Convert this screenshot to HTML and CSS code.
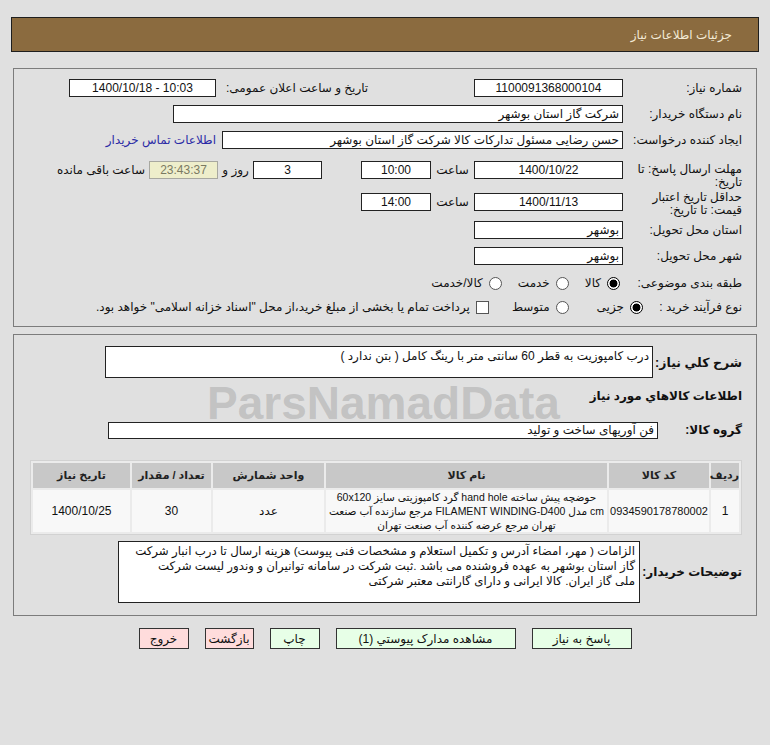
FILE: index.html
```html
<!DOCTYPE html>
<html lang="fa" dir="rtl">
<head>
<meta charset="utf-8">
<title>جزئیات اطلاعات نیاز</title>
<link rel="stylesheet" href="styles.css">
</head>
<body>
<div class="page">
  <div class="titlebar">جزئیات اطلاعات نیاز</div>

  <div class="panel p1">
    <div class="row">
      <div class="lbl">شماره نیاز:</div>
      <div class="box w149">1100091368000104</div>
      <div class="pushleft">
        <div class="lbl2">تاریخ و ساعت اعلان عمومی:</div>
        <div class="box w147" dir="ltr">1400/10/18 - 10:03</div>
      </div>
    </div>
    <div class="row">
      <div class="lbl">نام دستگاه خریدار:</div>
      <div class="box start w450">شرکت گاز استان بوشهر</div>
    </div>
    <div class="row">
      <div class="lbl">ایجاد کننده درخواست:</div>
      <div class="box start w401">حسن رضایی مسئول تدارکات کالا شرکت گاز استان بوشهر</div>
      <a class="link" href="#">اطلاعات تماس خریدار</a>
    </div>
    <div class="row tall r4">
      <div class="lbl two">مهلت ارسال پاسخ: تا<br>تاریخ:</div>
      <div class="box w149">1400/10/22</div>
      <div class="mid">ساعت</div>
      <div class="box w70">10:00</div>
      <div class="box w69 gap39">3</div>
      <div class="mid2">روز و</div>
      <div class="box remain w69">23:43:37</div>
      <div class="after">ساعت باقی مانده</div>
    </div>
    <div class="row tall r5">
      <div class="lbl two">حداقل تاریخ اعتبار<br>قیمت: تا تاریخ:</div>
      <div class="box w149">1400/11/13</div>
      <div class="mid">ساعت</div>
      <div class="box w70">14:00</div>
    </div>
    <div class="row">
      <div class="lbl">استان محل تحویل:</div>
      <div class="box start w149">بوشهر</div>
    </div>
    <div class="row">
      <div class="lbl">شهر محل تحویل:</div>
      <div class="box start w149">بوشهر</div>
    </div>
    <div class="row r8">
      <div class="lbl">طبقه بندی موضوعی:</div>
      <div class="opt first"><span class="radio on"></span>کالا</div>
      <div class="opt"><span class="radio"></span>خدمت</div>
      <div class="opt"><span class="radio"></span>کالا/خدمت</div>
    </div>
    <div class="row r9">
      <div class="lbl9">نوع فرآیند خرید :</div>
      <div class="opt"><span class="radio on"></span>جزیی</div>
      <div class="opt o9b"><span class="radio"></span>متوسط</div>
      <div class="opt o9c"><span class="chk"></span>پرداخت تمام یا بخشی از مبلغ خرید،از محل "اسناد خزانه اسلامی" خواهد بود.</div>
    </div>
  </div>

  <div class="panel p2">
    <div class="row desc">
      <div class="blbl l89">شرح کلي نياز:</div>
      <div class="box tl w548 h32">درب کامپوزیت به قطر 60 سانتی متر با رینگ کامل ( بتن ندارد )</div>
    </div>
    <div class="row info">
      <div class="blbl">اطلاعات کالاهاي مورد نياز</div>
    </div>
    <div class="row group">
      <div class="blbl l84">گروه کالا:</div>
      <div class="box start w550">فن آوریهای ساخت و تولید</div>
    </div>
    <table class="items">
      <colgroup>
        <col class="c1"><col class="c2"><col class="c3"><col class="c4"><col class="c5"><col class="c6">
      </colgroup>
      <thead>
        <tr><th>ردیف</th><th>کد کالا</th><th>نام کالا</th><th>واحد شمارش</th><th>تعداد / مقدار</th><th>تاریخ نیاز</th></tr>
      </thead>
      <tbody>
        <tr>
          <td>1</td>
          <td class="code">0934590178780002</td>
          <td class="name">حوضچه پیش ساخته hand hole گرد کامپوزیتی سایز 60x120<br>cm مدل FILAMENT WINDING-D400 مرجع سازنده آب صنعت<br>تهران مرجع عرضه کننده آب صنعت تهران</td>
          <td>عدد</td>
          <td>30</td>
          <td>1400/10/25</td>
        </tr>
      </tbody>
    </table>
    <div class="row notesrow">
      <div class="blbl l102">توضیحات خریدار:</div>
      <div class="notes">الزامات ( مهر، امضاء آدرس و تکمیل استعلام و مشخصات فنی پیوست) هزینه ارسال تا درب انبار شرکت<br>گاز استان بوشهر به عهده فروشنده می باشد .ثبت شرکت در سامانه توانیران و وندور لیست شرکت<br>ملی گاز ایران. کالا ایرانی و دارای گارانتی معتبر شرکتی</div>
    </div>
  </div>

  <div class="buttons">
    <div class="btn green b100">پاسخ به نیاز</div>
    <div class="btn green b180">مشاهده مدارک پیوستي (1)</div>
    <div class="btn green b50">چاپ</div>
    <div class="btn red b49">بازگشت</div>
    <div class="btn red b50">خروج</div>
  </div>

  <div class="watermark" aria-hidden="true"></div>
</div>
</body>
</html>
```

FILE: styles.css
```css
* { box-sizing: border-box; }

body {
  margin: 0;
  background: #e0e0e0;
  direction: rtl;
  font-family: "Liberation Sans", "DejaVu Sans", sans-serif;
  font-size: 12px;
  color: #111;
}

.page {
  position: relative;
  padding: 17px 11px 0;
}

.titlebar {
  height: 35px;
  background: #8b6b3f;
  border: 1px solid #1e1e1e;
  color: #f3ead6;
  padding-right: 26px;
  display: flex;
  align-items: center;
  font-size: 12px;
}

.panel {
  margin: 16px 2px 0;
  border: 1px solid #7c7c7c;
  padding: 6px 14px 9px 14px;
}

.row {
  display: flex;
  align-items: center;
  height: 26px;
}

.lbl {
  width: 119px;
  flex-shrink: 0;
  white-space: nowrap;
}

.lbl.two { line-height: 13px; }

.box {
  height: 18px;
  border: 1px solid #222;
  background: #fff;
  display: flex;
  align-items: center;
  justify-content: center;
  padding: 0 3px;
  white-space: nowrap;
  overflow: hidden;
  flex-shrink: 0;
}

.box.start { justify-content: flex-start; }

.w149 { width: 149px; }
.w147 { width: 147px; }
.w450 { width: 450px; }
.w401 { width: 401px; }
.w70 { width: 70px; }
.w69 { width: 69px; }
.w548 { width: 548px; }
.w550 { width: 550px; }
.h32 { height: 32px; }

.pushleft {
  margin-right: auto;
  margin-left: 41px;
  display: flex;
  align-items: center;
}

.lbl2 { margin-left: 10px; white-space: nowrap; }

.link {
  margin-right: 6px;
  color: #2b2ba6;
  text-decoration: none;
  white-space: nowrap;
}

.row.tall { align-items: flex-start; }
.r4 { height: 34px; }
.r4 .lbl { padding-top: 10px; }
.r4 .box, .r4 .mid, .r4 .mid2, .r4 .after { margin-top: 8px; }
.r5 { height: 30px; }
.r5 .lbl { padding-top: 4px; }
.r5 .box, .r5 .mid { margin-top: 6px; }

.mid {
  width: 43px;
  height: 18px;
  display: flex;
  align-items: center;
  justify-content: center;
  flex-shrink: 0;
}

.mid2 {
  width: 35px;
  height: 18px;
  display: flex;
  align-items: center;
  justify-content: center;
  flex-shrink: 0;
  white-space: nowrap;
}

.gap39 { margin-right: 39px; }

.box.remain {
  background: #eeeecb;
  border-color: #a8a8a0;
  color: #7a7a62;
}

.after {
  margin-right: 4px;
  height: 18px;
  display: flex;
  align-items: center;
  white-space: nowrap;
}

.r8 { height: 28px; }
.r9 { height: 20px; }

.lbl9 {
  width: 99px;
  flex-shrink: 0;
  white-space: nowrap;
}

.opt {
  display: flex;
  align-items: center;
  gap: 6px;
  margin-left: 16px;
  white-space: nowrap;
}

.opt.first { margin-right: 3px; }
.opt.o9b { margin-right: 12px; }
.opt.o9c { margin-right: 7px; }

.radio {
  width: 13px;
  height: 13px;
  border-radius: 50%;
  border: 1px solid #555;
  background: #fff;
  display: inline-block;
  flex-shrink: 0;
}

.radio.on {
  border: 1.5px solid #000;
  background: radial-gradient(circle, #000 0 3.6px, #fff 4.3px);
}

.chk {
  width: 13px;
  height: 13px;
  border: 1px solid #555;
  background: #fff;
  display: inline-block;
  flex-shrink: 0;
}

/* panel 2 */
.p2 {
  margin-top: 7px;
  padding: 11px 14px 12px 14px;
}

.blbl {
  font-weight: bold;
  font-size: 12px;
  white-space: nowrap;
  flex-shrink: 0;
}

.l89 { width: 89px; font-size: 12.5px; }
.l84 { width: 84px; }
.l102 { width: 102px; }

.desc { height: 32px; }
.box.tl {
  align-items: flex-start;
  justify-content: flex-start;
  padding-top: 2px;
}

.info { height: 20px; margin-top: 8px; }
.group { height: 20px; margin-top: 14px; }
.group .box { height: 17px; }

.items {
  width: 712px;
  margin-top: 20px;
  table-layout: fixed;
  border-collapse: separate;
  border-spacing: 2px;
  background: #ebebeb;
  border: 1px solid #d2d2d2;
}

.c1 { width: 28px; }
.c2 { width: 100px; }
.c3 { width: 281px; }
.c4 { width: 111px; }
.c5 { width: 79px; }
.c6 { width: 97px; }

.items th {
  background: #c8c8c8;
  height: 25px;
  font-weight: bold;
  font-size: 11px;
  padding: 0;
  color: #222;
}

.items td {
  background: #f8f8f8;
  height: 41px;
  text-align: center;
  padding: 0 2px;
  line-height: 14px;
  font-size: 12px;
}

.items td.code {
  font-size: 11px;
  padding: 0;
}

.items td.name {
  font-size: 10.5px;
  white-space: nowrap;
  overflow: hidden;
  padding: 0;
}

.notesrow {
  height: 62px;
  margin-top: 6px;
}

.notes {
  width: 522px;
  height: 62px;
  border: 1px solid #222;
  background: #fff;
  padding: 2px 4px;
  line-height: 15px;
  text-align: right;
  font-size: 11.8px;
  white-space: nowrap;
  overflow: hidden;
}

.buttons {
  display: flex;
  justify-content: center;
  gap: 16px;
  margin-top: 12px;
}

.btn {
  height: 21px;
  border: 1px solid #333;
  display: flex;
  align-items: center;
  justify-content: center;
  white-space: nowrap;
  font-size: 12px;
}

.green { background: #e7ffe7; }
.red { background: #ffdcdc; }
.b100 { width: 100px; }
.b180 { width: 180px; }
.b50 { width: 50px; }
.b49 { width: 49px; }

/* decorative watermark overlay */
.watermark {
  position: absolute;
  top: 386px;
  left: 207px;
  width: 360px;
  height: 34px;
  overflow: hidden;
  pointer-events: none;
}

.watermark::before {
  content: "ParsNamadData";
  display: block;
  direction: ltr;
  font-family: "Liberation Sans", sans-serif;
  font-weight: bold;
  font-size: 46px;
  line-height: 34px;
  color: rgba(140, 140, 140, 0.36);
  white-space: nowrap;
}
```
